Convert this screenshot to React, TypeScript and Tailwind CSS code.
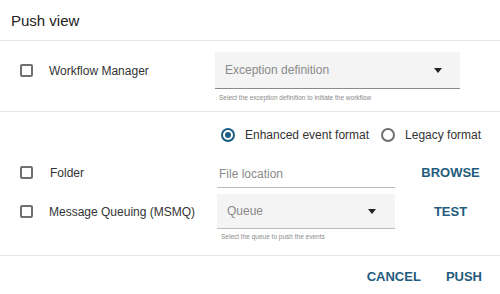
import React from 'react'

const Checkbox: React.FC = () => (
  <span className="block w-[13px] h-[13px] border-2 border-[#707070] rounded-[2px] shrink-0" />
)

const Radio: React.FC<{ checked?: boolean }> = ({ checked }) => (
  <span
    className={`flex items-center justify-center w-[14px] h-[14px] rounded-full border-2 shrink-0 ${
      checked ? 'border-[#1b5e84]' : 'border-[#6f6f6f]'
    }`}
  >
    {checked && <span className="block w-[6px] h-[6px] rounded-full bg-[#1b5e84]" />}
  </span>
)

const Caret: React.FC = () => (
  <svg width="8" height="5" viewBox="0 0 8 5">
    <path d="M0 0 L8 0 L4 5 Z" fill="#222" />
  </svg>
)

const App: React.FC = () => {
  return (
    <div className="w-[500px] h-[294px] bg-white text-[#333] flex flex-col font-['Liberation_Sans',Arial,sans-serif]">
      {/* header */}
      <div className="h-[41px] shrink-0 flex items-center pl-[11px] border-b border-[#e6e6e6]">
        <h2 className="text-[15px] text-[#222] pt-[2px]">Push view</h2>
      </div>

      {/* workflow section */}
      <div className="h-[71px] shrink-0 border-b border-[#e6e6e6] flex pt-[11px]">
        <div className="w-[215px] flex items-center gap-4 pl-[20px] h-[37px]">
          <Checkbox />
          <span className="text-[12px] text-[#333]">Workflow Manager</span>
        </div>
        <div className="flex flex-col w-[245px]">
          <div className="h-[37px] bg-[#f4f4f4] border-b border-[#8a8a8a] flex items-center justify-between pl-[10px] pr-[18px]">
            <span className="text-[12px] text-[#8a8a8a]">Exception definition</span>
            <Caret />
          </div>
          <span className="text-[6.5px] text-[#8a8a8a] pl-[4px] pt-[4px]">
            Select the exception definition to initiate the workflow
          </span>
        </div>
      </div>

      {/* output section */}
      <div className="flex-1 border-b border-[#e6e6e6] flex flex-col">
        <div className="flex items-center h-[43px] pl-[221px] pt-[2px]">
          <Radio checked />
          <span className="text-[12px] ml-[10px] text-[#333]">Enhanced event format</span>
          <span className="ml-[12px]"><Radio /></span>
          <span className="text-[12px] ml-[10px] text-[#333]">Legacy format</span>
        </div>

        <div className="flex items-center h-[33px]">
          <div className="w-[217px] flex items-center gap-4 pl-[20px] pt-[2px]">
            <Checkbox />
            <span className="text-[12px] text-[#333] ml-[1px]">Folder</span>
          </div>
          <div className="w-[178px] h-[33px] border-b border-[#bdbdbd] flex items-center pl-[2px] pt-[5px]">
            <span className="text-[12px] text-[#8a8a8a]">File location</span>
          </div>
          <div className="flex-1 flex justify-center pl-[6px] pt-[2px]">
            <button className="text-[13px] font-bold text-[#1f5c7e]">BROWSE</button>
          </div>
        </div>

        <div className="flex mt-[6px]">
          <div className="w-[217px] flex items-center gap-4 pl-[20px] h-[35px]">
            <Checkbox />
            <span className="text-[12px] text-[#333]">Message Queuing (MSMQ)</span>
          </div>
          <div className="flex flex-col w-[178px]">
            <div className="h-[35px] bg-[#f4f4f4] border-b border-[#bdbdbd] flex items-center justify-between pl-[10px] pr-[19px]">
              <span className="text-[12px] text-[#8a8a8a]">Queue</span>
              <Caret />
            </div>
            <span className="text-[6.5px] text-[#8a8a8a] pl-[4px] pt-[3px]">
              Select the queue to push the events
            </span>
          </div>
          <div className="flex-1 flex justify-center items-center h-[35px] pl-[6px]">
            <button className="text-[13px] font-bold text-[#1f5c7e]">TEST</button>
          </div>
        </div>
      </div>

      {/* footer */}
      <div className="h-[38px] shrink-0 flex items-center justify-end gap-[25px] pr-[18px] pt-[4px]">
        <button className="text-[13px] font-bold text-[#1f5c7e]">CANCEL</button>
        <button className="text-[13px] font-bold text-[#1f5c7e]">PUSH</button>
      </div>
    </div>
  )
}

export default App
